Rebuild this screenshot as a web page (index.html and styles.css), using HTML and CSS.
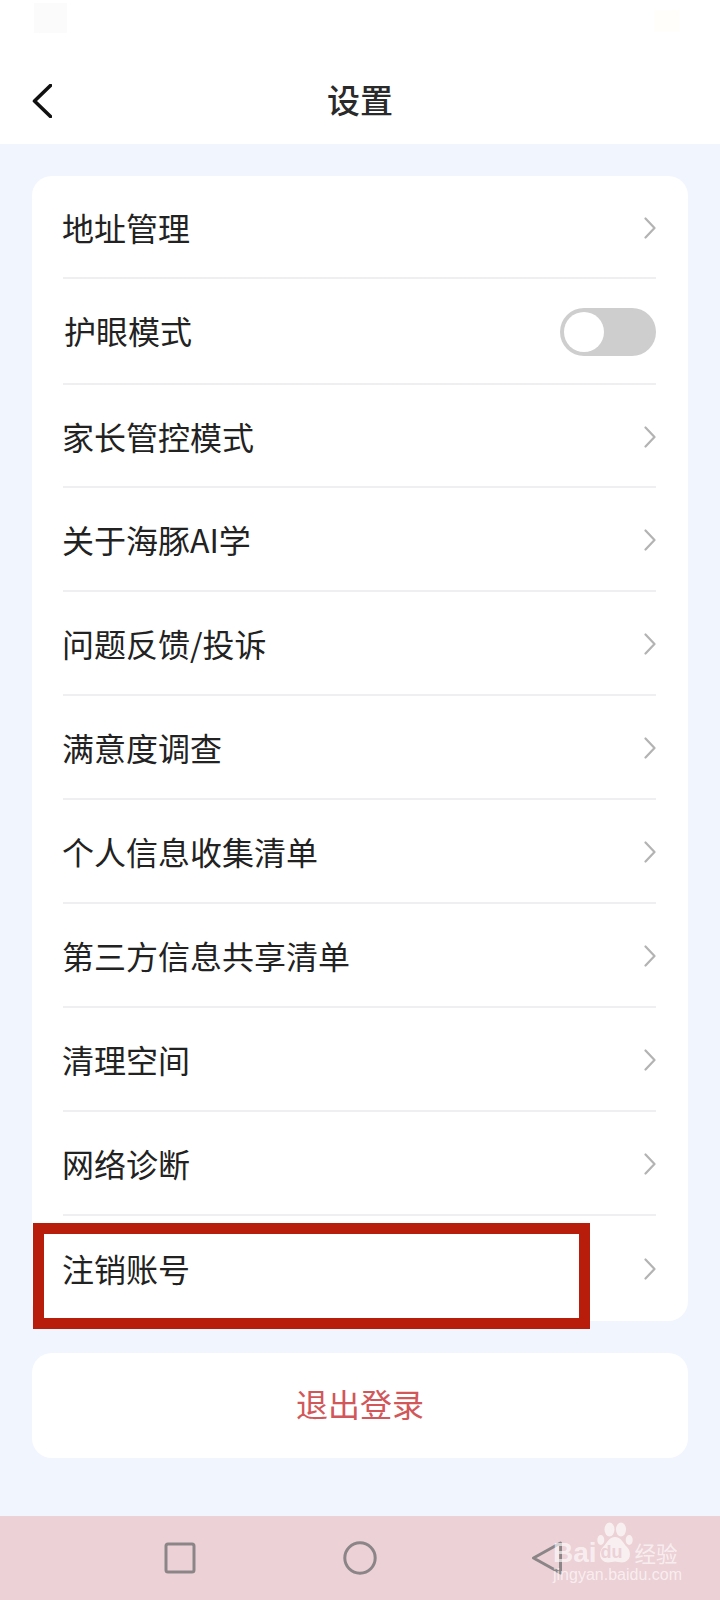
FILE: index.html
```html
<!DOCTYPE html>
<html lang="zh-CN">
<head>
  <meta charset="UTF-8" />
  <meta name="viewport" content="width=device-width, initial-scale=1.0" />
  <title>设置</title>
  <link rel="stylesheet" href="styles.css">
</head>
<body>
  <div class="screen">
    <div class="top-bar">
      <div class="status-bar">
        <span class="status-left"></span>
        <span class="status-right"></span>
      </div>
      <div class="header">
        <svg class="back-icon" viewBox="0 0 20 34" width="20" height="34">
          <path d="M18.5 1.5 L2.5 17 L18.5 32.5" fill="none" stroke="#111" stroke-width="3.6" stroke-linecap="round" stroke-linejoin="round"/>
        </svg>
        <div class="header-title">设置</div>
      </div>
    </div>

    <div class="content">
      <div class="card">
        <div class="row row-first">
          <span class="row-text">地址管理</span>
          <svg class="chevron" viewBox="0 0 12 22" width="12" height="22"><path d="M1.5 1.5 L10.5 11 L1.5 20.5" fill="none" stroke="#b3b3b3" stroke-width="2.2" stroke-linecap="round" stroke-linejoin="round"/></svg>
        </div>
        <div class="row row-switch">
          <span class="row-text row-text-shift">护眼模式</span>
          <div class="switch"><span class="switch-knob"></span></div>
        </div>
        <div class="row row-third">
          <span class="row-text">家长管控模式</span>
          <svg class="chevron" viewBox="0 0 12 22" width="12" height="22"><path d="M1.5 1.5 L10.5 11 L1.5 20.5" fill="none" stroke="#b3b3b3" stroke-width="2.2" stroke-linecap="round" stroke-linejoin="round"/></svg>
        </div>
        <div class="row">
          <span class="row-text">关于海豚AI学</span>
          <svg class="chevron" viewBox="0 0 12 22" width="12" height="22"><path d="M1.5 1.5 L10.5 11 L1.5 20.5" fill="none" stroke="#b3b3b3" stroke-width="2.2" stroke-linecap="round" stroke-linejoin="round"/></svg>
        </div>
        <div class="row">
          <span class="row-text">问题反馈/投诉</span>
          <svg class="chevron" viewBox="0 0 12 22" width="12" height="22"><path d="M1.5 1.5 L10.5 11 L1.5 20.5" fill="none" stroke="#b3b3b3" stroke-width="2.2" stroke-linecap="round" stroke-linejoin="round"/></svg>
        </div>
        <div class="row">
          <span class="row-text">满意度调查</span>
          <svg class="chevron" viewBox="0 0 12 22" width="12" height="22"><path d="M1.5 1.5 L10.5 11 L1.5 20.5" fill="none" stroke="#b3b3b3" stroke-width="2.2" stroke-linecap="round" stroke-linejoin="round"/></svg>
        </div>
        <div class="row">
          <span class="row-text">个人信息收集清单</span>
          <svg class="chevron" viewBox="0 0 12 22" width="12" height="22"><path d="M1.5 1.5 L10.5 11 L1.5 20.5" fill="none" stroke="#b3b3b3" stroke-width="2.2" stroke-linecap="round" stroke-linejoin="round"/></svg>
        </div>
        <div class="row">
          <span class="row-text">第三方信息共享清单</span>
          <svg class="chevron" viewBox="0 0 12 22" width="12" height="22"><path d="M1.5 1.5 L10.5 11 L1.5 20.5" fill="none" stroke="#b3b3b3" stroke-width="2.2" stroke-linecap="round" stroke-linejoin="round"/></svg>
        </div>
        <div class="row">
          <span class="row-text">清理空间</span>
          <svg class="chevron" viewBox="0 0 12 22" width="12" height="22"><path d="M1.5 1.5 L10.5 11 L1.5 20.5" fill="none" stroke="#b3b3b3" stroke-width="2.2" stroke-linecap="round" stroke-linejoin="round"/></svg>
        </div>
        <div class="row">
          <span class="row-text">网络诊断</span>
          <svg class="chevron" viewBox="0 0 12 22" width="12" height="22"><path d="M1.5 1.5 L10.5 11 L1.5 20.5" fill="none" stroke="#b3b3b3" stroke-width="2.2" stroke-linecap="round" stroke-linejoin="round"/></svg>
        </div>
        <div class="row row-last">
          <span class="row-text">注销账号</span>
          <svg class="chevron" viewBox="0 0 12 22" width="12" height="22"><path d="M1.5 1.5 L10.5 11 L1.5 20.5" fill="none" stroke="#b3b3b3" stroke-width="2.2" stroke-linecap="round" stroke-linejoin="round"/></svg>
        </div>
        <!-- Red annotation box over the last row -->
        <div class="highlight-box"></div>
      </div>

      <div class="card logout-card">退出登录</div>
    </div>

    <div class="nav-bar">
      <svg viewBox="0 0 32 32" width="32" height="32"><rect x="2" y="2" width="28" height="28" rx="2" fill="none" stroke="#8b8587" stroke-width="3"/></svg>
      <svg viewBox="0 0 34 34" width="34" height="34"><circle cx="17" cy="17" r="15.2" fill="none" stroke="#8b8587" stroke-width="3"/></svg>
      <svg class="nav-back" viewBox="0 0 32 34" width="32" height="34"><path d="M29.5 2 L2.5 17 L29.5 32 Z" fill="none" stroke="#8b8587" stroke-width="3" stroke-linejoin="round"/></svg>

      <!-- Baidu watermark -->
      <div class="watermark">
        <div class="wm-top">
          <span class="wm-bai">Bai</span>
          <div class="wm-logo">
            <svg viewBox="0 0 36 41" width="36" height="41">
              <ellipse cx="12.5" cy="7.5" rx="5" ry="7"/>
              <ellipse cx="24" cy="7.5" rx="5" ry="7"/>
              <ellipse cx="3.8" cy="18" rx="3.5" ry="5"/>
              <ellipse cx="32.2" cy="18" rx="3.5" ry="5"/>
              <path d="M18 15 C12 15 10 21 6 25 C1 30 2 40 11 40.5 C14 40.5 16 39.5 18 39.5 C20 39.5 22 40.5 25 40.5 C34 40 35 30 30 25 C26 21 24 15 18 15 Z"/>
            </svg>
            <span class="wm-du">du</span>
          </div>
          <span class="wm-jy">经验</span>
        </div>
        <div class="wm-url">jingyan.baidu.com</div>
      </div>
    </div>
  </div>
</body>
</html>
```

FILE: styles.css
```css
* {
  box-sizing: border-box;
}

body {
  margin: 0;
  font-family: "Noto Sans CJK SC", "Noto Sans", sans-serif;
  background-color: #f1f6fe;
  color: #222;
}

.screen {
  width: 720px;
  height: 1600px;
  display: flex;
  flex-direction: column;
  overflow: hidden;
}

.top-bar {
  height: 144px;
  background-color: #fff;
}

/* Blurred out status bar */
.status-bar {
  height: 66px;
  padding: 3px 40px 0 34px;
  display: flex;
  justify-content: space-between;
  align-items: flex-start;
}

.status-left {
  width: 33px;
  height: 30px;
  background-color: #fbfbfb;
}

.status-right {
  width: 26px;
  height: 22px;
  margin-top: 7px;
  background-color: #fffefb;
}

.header {
  height: 70px;
  padding-left: 32px;
  display: flex;
  align-items: center;
  position: relative;
}

.header-title {
  position: absolute;
  left: 0;
  right: 0;
  top: -2px;
  text-align: center;
  font-size: 33px;
  font-weight: 500;
  color: #2a2a2a;
  line-height: 70px;
}

.content {
  flex: 1;
  padding: 32px 32px 0;
}

.card {
  position: relative;
  background-color: #fff;
  border-radius: 20px;
}

.row {
  height: 104px;
  margin: 0 32px 0 31px;
  display: flex;
  align-items: center;
  justify-content: space-between;
  border-bottom: 2px solid #efeff1;
}

.row-first {
  height: 103px;
}

.row-switch {
  height: 106px;
}

.row-third {
  height: 103px;
}

.row-last {
  height: 105px;
  padding-bottom: 2px;
  border-bottom: none;
}

.row-text {
  font-size: 32px;
  line-height: 44px;
  margin-left: -1px;
  color: #222;
}

.row-text-shift {
  margin-left: 1px;
  margin-bottom: 2px;
}

.chevron {
  flex-shrink: 0;
  margin-top: 2px;
}

.switch {
  width: 96px;
  height: 48px;
  padding: 4px;
  margin-top: 2px;
  border-radius: 24px;
  background-color: #cecece;
}

.switch-knob {
  display: block;
  width: 40px;
  height: 40px;
  border-radius: 50%;
  background-color: #fff;
}

.highlight-box {
  position: absolute;
  left: 1px;
  bottom: -8px;
  width: 557px;
  height: 106px;
  border: 11px solid #b81c0a;
}

.logout-card {
  margin-top: 32px;
  height: 105px;
  padding-bottom: 5px;
  display: flex;
  align-items: center;
  justify-content: center;
  font-size: 32px;
  color: #d2575a;
}

.nav-bar {
  height: 84px;
  background-color: #ecd1d6;
  position: relative;
  display: flex;
  align-items: center;
  gap: 147px;
  padding-left: 164px;
}

.nav-back {
  margin-left: 7px;
}

.watermark {
  position: absolute;
  left: 553px;
  top: 6px;
  width: 140px;
  color: rgba(255, 255, 255, 0.65);
  font-family: "Liberation Sans", sans-serif;
}

.wm-top {
  height: 41px;
  display: flex;
  align-items: flex-end;
}

.wm-bai {
  font-size: 28px;
  font-weight: 700;
  line-height: 28px;
  margin-bottom: -4px;
  flex-shrink: 0;
}

.wm-logo {
  position: relative;
  width: 36px;
  height: 41px;
  flex-shrink: 0;
  fill: rgba(255, 255, 255, 0.65);
}

.wm-du {
  position: absolute;
  left: 4px;
  right: 0;
  top: 20px;
  font-size: 18px;
  font-weight: 700;
  line-height: 20px;
  color: #ecd1d6;
}

.wm-jy {
  font-family: "Noto Sans CJK SC", sans-serif;
  font-size: 21.5px;
  line-height: 24px;
  margin-left: 2px;
  margin-bottom: -2px;
  white-space: nowrap;
  flex-shrink: 0;
}

.wm-url {
  font-size: 16px;
  line-height: 20px;
  margin-top: 2px;
  white-space: nowrap;
}
```
